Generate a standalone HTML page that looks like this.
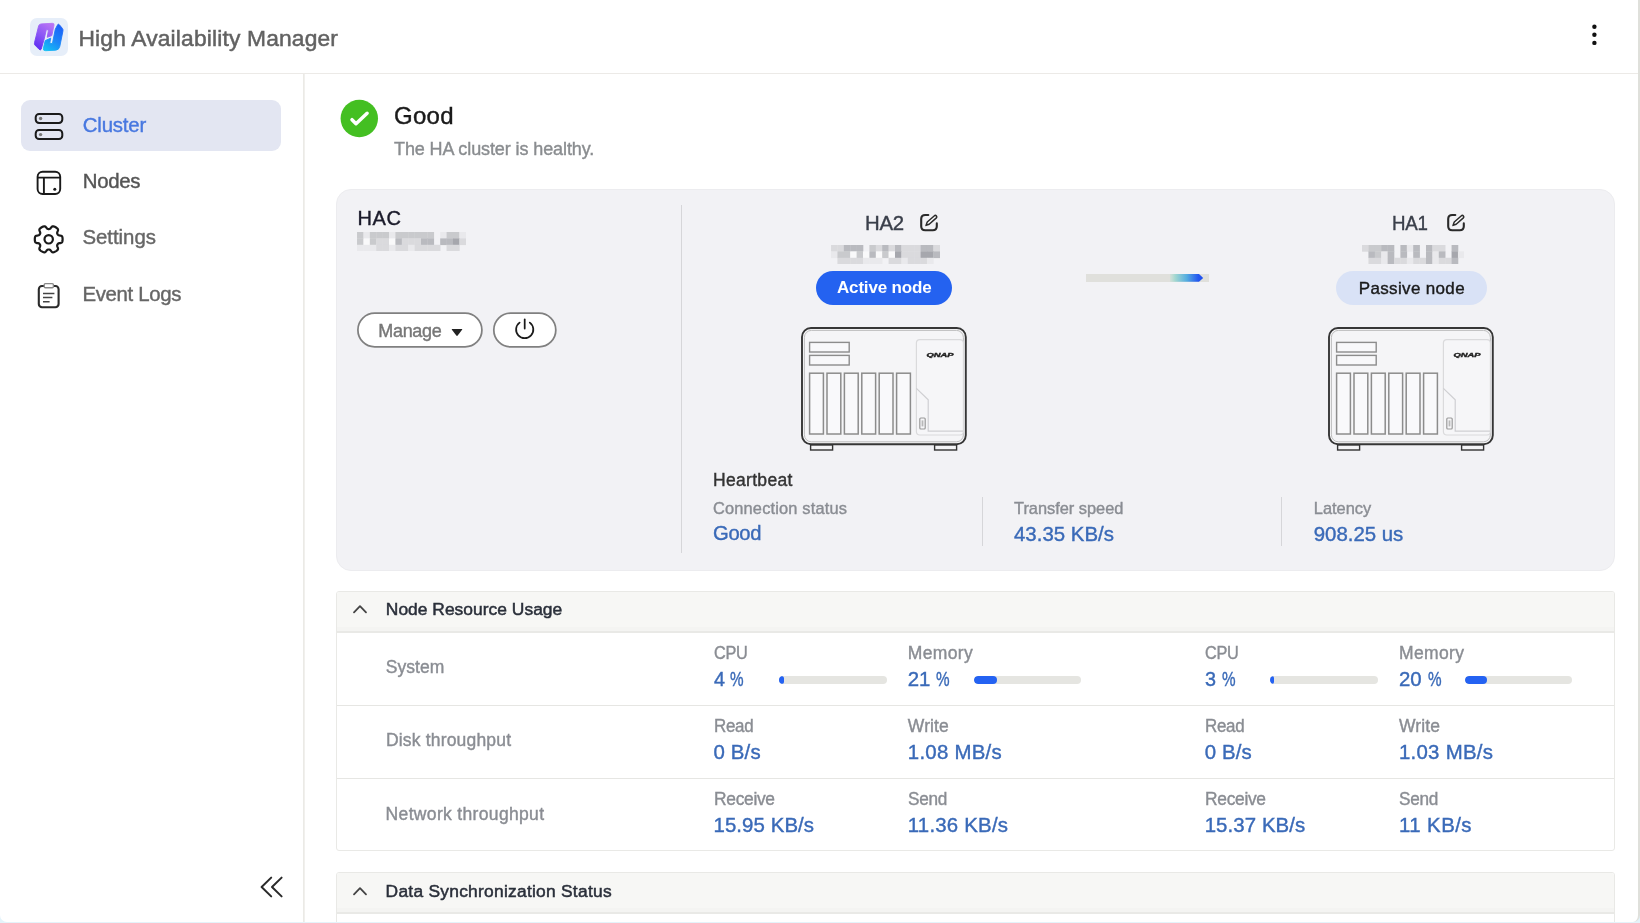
<!DOCTYPE html>
<html lang="en">
<head>
<meta charset="utf-8">
<title>High Availability Manager</title>
<style>
*{box-sizing:border-box;margin:0;padding:0}
html,body{width:1640px;height:923px;overflow:hidden;background:#e4f3fa}
body{position:relative;font-family:"Liberation Sans",Arial,sans-serif;color:#333}
.abs,.t,svg.i{position:absolute}
.t{white-space:nowrap;line-height:1;display:block}
#app{position:absolute;left:0;top:0;width:1640px;height:922px;overflow:hidden;will-change:transform;background:#fff;border-right:2px solid #dfe0db;border-radius:0 0 7px 7px}
header{position:absolute;left:0;top:0;width:1640px;height:74px;border-bottom:1px solid #eceae7;background:#fff}
.vline{position:absolute;left:303px;top:74px;width:2px;height:849px;background:linear-gradient(to right,#ebeae6 50%,#f1f0ed 50%)}
.sel{position:absolute;left:21px;top:100px;width:259.5px;height:51px;border-radius:9px;background:#e3e6f2}
.panel{position:absolute;left:335.5px;top:188.5px;width:1279px;height:382px;border-radius:15px;background:#f2f2f5;border:1px solid #ececef}
.pdiv{position:absolute;width:1px;background:#d6d6d9}
.pill{position:absolute;height:33.6px;border-radius:17px}
.bar{position:absolute;height:8px;border-radius:4px;background:#e5e5e1;overflow:hidden}
.bar i{position:absolute;left:0;top:0;height:8px;border-radius:4px;background:#2462f2;display:block}
.acc{position:absolute;left:336px;width:1279px;border:1px solid #e9e9e6;border-radius:3px;background:#fff;overflow:hidden}
.acch{position:absolute;left:0;top:0;width:100%;height:41px;background:linear-gradient(to bottom,#f7f7f5 0,#f7f7f5 35px,#f4f4f2 35px,#f4f4f2 39px,#e9e9e6 39px,#e9e9e6 40.5px,#fff 40.5px)}
.row{position:absolute;left:0;width:100%;height:1px;background:#e6e6e3}
</style>
</head>
<body>
<div id="app">
<header>
<svg class="i" style="left:30px;top:18px" width="38" height="38" viewBox="0 0 38 38">
<defs>
<linearGradient id="gp" x1="0.7" y1="0" x2="0.2" y2="1"><stop offset="0" stop-color="#b672f4"/><stop offset="0.5" stop-color="#8a56f6"/><stop offset="1" stop-color="#5c2cf2"/></linearGradient>
<linearGradient id="gb" x1="0.7" y1="0" x2="0.2" y2="1"><stop offset="0" stop-color="#1a62f8"/><stop offset="0.55" stop-color="#1c88f8"/><stop offset="1" stop-color="#14bef4"/></linearGradient>
</defs>
<rect x="0" y="0" width="38" height="38" rx="7" fill="#e6eef9"/>
<path d="M11.2,5.9 L22.4,5.3 Q24.5,5.3 24,7.3 L21.8,17.6 L17.2,19.3 L18.5,11.9 L16.3,11.7 L14.2,20.9 L11.2,31.2 Q10.4,32.6 9.1,31.3 L4.9,27 Q4.1,26 4.6,24.3 L8.6,8 Q9.2,6 11.2,5.9 Z" fill="url(#gp)" stroke="url(#gp)" stroke-width="0.9" stroke-linejoin="round"/>
<path d="M27.8,6.5 Q28.6,5.8 29.4,6.8 L32.4,10.4 Q33.3,11.5 32.9,13.2 L29.8,28.4 Q29,32 25.6,32.2 L15.6,32.7 Q12.9,32.7 13.4,30.2 L15.2,22.6 L20.7,20.2 L19.8,25.3 L22.4,25.6 L25.3,11.2 Z" fill="url(#gb)" stroke="url(#gb)" stroke-width="0.9" stroke-linejoin="round"/>
</svg>
<span class="t" style="top:25px;font-size:22.8px;line-height:26px;color:#626262;left:78.50px;letter-spacing:0.161px;-webkit-text-stroke:0.5px #626262;">High Availability Manager</span>
<svg class="i" style="left:1588px;top:20px" width="14" height="30" viewBox="0 0 14 30"><circle cx="6.4" cy="6.7" r="2.2" fill="#111"/><circle cx="6.4" cy="14.8" r="2.2" fill="#111"/><circle cx="6.4" cy="22.9" r="2.2" fill="#111"/></svg>
</header>
<div class="vline"></div>
<nav>
<div class="sel"></div>
<!-- nav icons -->
<svg class="i" style="left:30px;top:108px" width="40" height="36" viewBox="30 108 40 36" fill="none" stroke="#1a1a1a" stroke-width="2">
<rect x="35.7" y="113.9" width="26.6" height="9.1" rx="3.4"/><rect x="35.7" y="130" width="26.6" height="9.1" rx="3.4"/>
<circle cx="40.6" cy="118.5" r="1.7" fill="#777" stroke="none"/><circle cx="40.6" cy="134.6" r="1.7" fill="#777" stroke="none"/>
</svg>
<svg class="i" style="left:30px;top:166px" width="40" height="34" viewBox="30 166 40 34" fill="none" stroke="#1a1a1a" stroke-width="1.9">
<rect x="37.6" y="171.7" width="22.6" height="22.3" rx="5"/><path d="M37.6,177.6 H60.2 M43.9,177.6 V194"/>
<circle cx="54.8" cy="189.3" r="1.5" fill="#1a1a1a" stroke="none"/>
</svg>
<svg class="i" style="left:30px;top:222px" width="40" height="36" viewBox="30 222 40 36" fill="none" stroke="#1a1a1a" stroke-width="2.2" stroke-linejoin="round">
<path d="M62.60,239.30 L62.59,239.79 L62.56,240.27 L62.51,240.75 L62.43,241.23 L62.31,241.70 L62.11,242.15 L61.74,242.55 L61.12,242.86 L60.23,243.05 L59.34,243.17 L58.68,243.33 L58.24,243.55 L57.95,243.81 L57.72,244.10 L57.53,244.40 L57.37,244.72 L57.23,245.05 L57.15,245.44 L57.18,245.93 L57.37,246.58 L57.71,247.41 L57.99,248.27 L58.04,248.97 L57.87,249.49 L57.58,249.89 L57.24,250.23 L56.86,250.53 L56.47,250.82 L56.07,251.09 L55.65,251.34 L55.23,251.57 L54.79,251.79 L54.35,251.99 L53.89,252.16 L53.43,252.29 L52.94,252.33 L52.41,252.22 L51.82,251.83 L51.22,251.16 L50.67,250.45 L50.20,249.96 L49.79,249.69 L49.42,249.57 L49.06,249.51 L48.70,249.50 L48.34,249.51 L47.98,249.57 L47.61,249.69 L47.20,249.96 L46.73,250.45 L46.18,251.16 L45.58,251.83 L44.99,252.22 L44.46,252.33 L43.97,252.29 L43.51,252.16 L43.05,251.99 L42.61,251.79 L42.17,251.57 L41.75,251.34 L41.33,251.09 L40.93,250.82 L40.54,250.53 L40.16,250.23 L39.82,249.89 L39.53,249.49 L39.36,248.97 L39.41,248.27 L39.69,247.41 L40.03,246.58 L40.22,245.93 L40.25,245.44 L40.17,245.05 L40.03,244.72 L39.87,244.40 L39.68,244.10 L39.45,243.81 L39.16,243.55 L38.72,243.33 L38.06,243.17 L37.17,243.05 L36.28,242.86 L35.66,242.55 L35.29,242.15 L35.09,241.70 L34.97,241.23 L34.89,240.75 L34.84,240.27 L34.81,239.79 L34.80,239.30 L34.81,238.81 L34.84,238.33 L34.89,237.85 L34.97,237.37 L35.09,236.90 L35.29,236.45 L35.66,236.05 L36.28,235.74 L37.17,235.55 L38.06,235.43 L38.72,235.27 L39.16,235.05 L39.45,234.79 L39.68,234.50 L39.87,234.20 L40.03,233.88 L40.17,233.55 L40.25,233.16 L40.22,232.67 L40.03,232.02 L39.69,231.19 L39.41,230.33 L39.36,229.63 L39.53,229.11 L39.82,228.71 L40.16,228.37 L40.54,228.07 L40.93,227.78 L41.33,227.51 L41.75,227.26 L42.17,227.03 L42.61,226.81 L43.05,226.61 L43.51,226.44 L43.97,226.31 L44.46,226.27 L44.99,226.38 L45.58,226.77 L46.18,227.44 L46.73,228.15 L47.20,228.64 L47.61,228.91 L47.98,229.03 L48.34,229.09 L48.70,229.10 L49.06,229.09 L49.42,229.03 L49.79,228.91 L50.20,228.64 L50.67,228.15 L51.22,227.44 L51.82,226.77 L52.41,226.38 L52.94,226.27 L53.43,226.31 L53.89,226.44 L54.35,226.61 L54.79,226.81 L55.23,227.03 L55.65,227.26 L56.07,227.51 L56.47,227.78 L56.86,228.07 L57.24,228.37 L57.58,228.71 L57.87,229.11 L58.04,229.63 L57.99,230.33 L57.71,231.19 L57.37,232.02 L57.18,232.67 L57.15,233.16 L57.23,233.55 L57.37,233.88 L57.53,234.20 L57.72,234.50 L57.95,234.79 L58.24,235.05 L58.68,235.27 L59.34,235.43 L60.23,235.55 L61.12,235.74 L61.74,236.05 L62.11,236.45 L62.31,236.90 L62.43,237.37 L62.51,237.85 L62.56,238.33 L62.59,238.81Z"/><circle cx="48.7" cy="239.3" r="4.2"/>
</svg>
<svg class="i" style="left:30px;top:280px" width="40" height="32" viewBox="30 280 40 32" fill="none" stroke="#2a2a2a" stroke-width="2.1">
<rect x="38.8" y="286" width="19.8" height="21.2" rx="3.2"/>
<rect x="44.2" y="283.6" width="9.2" height="4.2" rx="1.2" fill="#fff" stroke="#888" stroke-width="1.4"/>
<path d="M43,293.4 H54.4 M43,297.6 H52.4 M43,301.8 H49.6" stroke-width="1.5" stroke="#444"/>
</svg>
<svg class="i" style="left:256px;top:873px" width="30" height="28" viewBox="256 873 30 28" fill="none" stroke="#2a2a2a" stroke-width="2" stroke-linecap="round" stroke-linejoin="round">
<path d="M271.2,877.6 L261.6,887 L271.2,896.4 M281.6,877.6 L272,887 L281.6,896.4"/>
</svg>
<span class="t" style="top:114px;font-size:20.4px;line-height:22px;color:#4878e0;left:82.80px;letter-spacing:-0.193px;-webkit-text-stroke:0.4px #4878e0;">Cluster</span>
<span class="t" style="top:170px;font-size:20.4px;line-height:22px;color:#555;left:82.80px;letter-spacing:-0.318px;-webkit-text-stroke:0.4px #555;">Nodes</span>
<span class="t" style="top:226px;font-size:20.4px;line-height:22px;color:#666;left:82.40px;letter-spacing:-0.016px;-webkit-text-stroke:0.4px #666;">Settings</span>
<span class="t" style="top:283px;font-size:20.4px;line-height:22px;color:#666;left:82.40px;letter-spacing:-0.319px;-webkit-text-stroke:0.4px #666;">Event Logs</span>
</nav>
<main>
<svg class="i" style="left:338px;top:97px" width="42" height="42" viewBox="338 97 42 42"><circle cx="359.3" cy="118.5" r="18.7" fill="#44bf22"/><path d="M352,119.7 L356,123.7 L367.1,113.3" fill="none" stroke="#fff" stroke-width="3.5" stroke-linecap="round" stroke-linejoin="round"/></svg>
<span class="t" style="top:102px;font-size:24px;line-height:27px;color:#1a1a1a;left:394.00px;letter-spacing:0.272px;-webkit-text-stroke:0.4px #1a1a1a;">Good</span>
<span class="t" style="top:139px;font-size:18px;line-height:20px;color:#8a8d90;left:394.00px;letter-spacing:-0.100px;-webkit-text-stroke:0.4px #8a8d90;">The HA cluster is healthy.</span>
<section class="panel"></section>
<div class="pdiv" style="left:681px;top:205px;height:348px"></div>
<div class="pdiv" style="left:982px;top:497px;height:49px"></div>
<div class="pdiv" style="left:1281px;top:497px;height:49px"></div>
<svg class="i" style="left:357.3px;top:231.8px;filter:blur(0.5px)" width="108.8" height="19.2" viewBox="0 0 108.8 19.2"><rect x="0.0" y="0.0" width="6.7" height="6.7" fill="#c9cacd"/><rect x="6.4" y="0.0" width="6.7" height="6.7" fill="#e9e9ec"/><rect x="12.8" y="0.0" width="6.7" height="6.7" fill="#c9cacd"/><rect x="19.2" y="0.0" width="6.7" height="6.7" fill="#c9cacd"/><rect x="25.6" y="0.0" width="6.7" height="6.7" fill="#c9cacd"/><rect x="32.0" y="0.0" width="6.7" height="6.7" fill="#e9e9ec"/><rect x="38.4" y="0.0" width="6.7" height="6.7" fill="#c9cacd"/><rect x="44.8" y="0.0" width="6.7" height="6.7" fill="#c9cacd"/><rect x="51.2" y="0.0" width="6.7" height="6.7" fill="#c9cacd"/><rect x="57.6" y="0.0" width="6.7" height="6.7" fill="#c9cacd"/><rect x="64.0" y="0.0" width="6.7" height="6.7" fill="#c9cacd"/><rect x="70.4" y="0.0" width="6.7" height="6.7" fill="#c9cacd"/><rect x="83.2" y="0.0" width="6.7" height="6.7" fill="#e9e9ec"/><rect x="89.6" y="0.0" width="6.7" height="6.7" fill="#c9cacd"/><rect x="96.0" y="0.0" width="6.7" height="6.7" fill="#c9cacd"/><rect x="102.4" y="0.0" width="6.7" height="6.7" fill="#e9e9ec"/><rect x="0.0" y="6.4" width="6.7" height="6.7" fill="#c9cacd"/><rect x="6.4" y="6.4" width="6.7" height="6.7" fill="#f9f9fa"/><rect x="12.8" y="6.4" width="6.7" height="6.7" fill="#c9cacd"/><rect x="19.2" y="6.4" width="6.7" height="6.7" fill="#dadadd"/><rect x="25.6" y="6.4" width="6.7" height="6.7" fill="#dadadd"/><rect x="32.0" y="6.4" width="6.7" height="6.7" fill="#f9f9fa"/><rect x="38.4" y="6.4" width="6.7" height="6.7" fill="#b9babf"/><rect x="44.8" y="6.4" width="6.7" height="6.7" fill="#dadadd"/><rect x="51.2" y="6.4" width="6.7" height="6.7" fill="#dadadd"/><rect x="57.6" y="6.4" width="6.7" height="6.7" fill="#dadadd"/><rect x="64.0" y="6.4" width="6.7" height="6.7" fill="#b9babf"/><rect x="70.4" y="6.4" width="6.7" height="6.7" fill="#b9babf"/><rect x="83.2" y="6.4" width="6.7" height="6.7" fill="#b9babf"/><rect x="89.6" y="6.4" width="6.7" height="6.7" fill="#b9babf"/><rect x="96.0" y="6.4" width="6.7" height="6.7" fill="#a6a7ad"/><rect x="102.4" y="6.4" width="6.7" height="6.7" fill="#dadadd"/><rect x="0.0" y="12.8" width="6.7" height="6.7" fill="#e9e9ec"/><rect x="6.4" y="12.8" width="6.7" height="6.7" fill="#e9e9ec"/><rect x="12.8" y="12.8" width="6.7" height="6.7" fill="#e9e9ec"/><rect x="19.2" y="12.8" width="6.7" height="6.7" fill="#dadadd"/><rect x="25.6" y="12.8" width="6.7" height="6.7" fill="#dadadd"/><rect x="32.0" y="12.8" width="6.7" height="6.7" fill="#e9e9ec"/><rect x="38.4" y="12.8" width="6.7" height="6.7" fill="#dadadd"/><rect x="44.8" y="12.8" width="6.7" height="6.7" fill="#dadadd"/><rect x="51.2" y="12.8" width="6.7" height="6.7" fill="#e9e9ec"/><rect x="57.6" y="12.8" width="6.7" height="6.7" fill="#dadadd"/><rect x="64.0" y="12.8" width="6.7" height="6.7" fill="#dadadd"/><rect x="70.4" y="12.8" width="6.7" height="6.7" fill="#dadadd"/><rect x="76.8" y="12.8" width="6.7" height="6.7" fill="#dadadd"/><rect x="89.6" y="12.8" width="6.7" height="6.7" fill="#dadadd"/><rect x="96.0" y="12.8" width="6.7" height="6.7" fill="#dadadd"/></svg>
<svg class="i" style="left:830.8px;top:244.5px;filter:blur(0.5px)" width="108.8" height="19.2" viewBox="0 0 108.8 19.2"><rect x="0.0" y="0.0" width="6.7" height="6.7" fill="#dadadd"/><rect x="6.4" y="0.0" width="6.7" height="6.7" fill="#dadadd"/><rect x="12.8" y="0.0" width="6.7" height="6.7" fill="#b9babf"/><rect x="19.2" y="0.0" width="6.7" height="6.7" fill="#b9babf"/><rect x="25.6" y="0.0" width="6.7" height="6.7" fill="#b9babf"/><rect x="38.4" y="0.0" width="6.7" height="6.7" fill="#c9cacd"/><rect x="44.8" y="0.0" width="6.7" height="6.7" fill="#dadadd"/><rect x="51.2" y="0.0" width="6.7" height="6.7" fill="#b9babf"/><rect x="57.6" y="0.0" width="6.7" height="6.7" fill="#dadadd"/><rect x="64.0" y="0.0" width="6.7" height="6.7" fill="#b9babf"/><rect x="70.4" y="0.0" width="6.7" height="6.7" fill="#dadadd"/><rect x="76.8" y="0.0" width="6.7" height="6.7" fill="#dadadd"/><rect x="83.2" y="0.0" width="6.7" height="6.7" fill="#dadadd"/><rect x="89.6" y="0.0" width="6.7" height="6.7" fill="#b9babf"/><rect x="96.0" y="0.0" width="6.7" height="6.7" fill="#b9babf"/><rect x="102.4" y="0.0" width="6.7" height="6.7" fill="#dadadd"/><rect x="0.0" y="6.4" width="6.7" height="6.7" fill="#e9e9ec"/><rect x="6.4" y="6.4" width="6.7" height="6.7" fill="#c9cacd"/><rect x="12.8" y="6.4" width="6.7" height="6.7" fill="#c9cacd"/><rect x="19.2" y="6.4" width="6.7" height="6.7" fill="#f9f9fa"/><rect x="25.6" y="6.4" width="6.7" height="6.7" fill="#c9cacd"/><rect x="32.0" y="6.4" width="6.7" height="6.7" fill="#f9f9fa"/><rect x="38.4" y="6.4" width="6.7" height="6.7" fill="#b9babf"/><rect x="44.8" y="6.4" width="6.7" height="6.7" fill="#f9f9fa"/><rect x="51.2" y="6.4" width="6.7" height="6.7" fill="#c9cacd"/><rect x="57.6" y="6.4" width="6.7" height="6.7" fill="#f9f9fa"/><rect x="64.0" y="6.4" width="6.7" height="6.7" fill="#a6a7ad"/><rect x="70.4" y="6.4" width="6.7" height="6.7" fill="#dadadd"/><rect x="76.8" y="6.4" width="6.7" height="6.7" fill="#dadadd"/><rect x="83.2" y="6.4" width="6.7" height="6.7" fill="#dadadd"/><rect x="89.6" y="6.4" width="6.7" height="6.7" fill="#a6a7ad"/><rect x="96.0" y="6.4" width="6.7" height="6.7" fill="#a6a7ad"/><rect x="102.4" y="6.4" width="6.7" height="6.7" fill="#b9babf"/><rect x="6.4" y="12.8" width="6.7" height="6.7" fill="#dadadd"/><rect x="12.8" y="12.8" width="6.7" height="6.7" fill="#dadadd"/><rect x="19.2" y="12.8" width="6.7" height="6.7" fill="#dadadd"/><rect x="25.6" y="12.8" width="6.7" height="6.7" fill="#dadadd"/><rect x="32.0" y="12.8" width="6.7" height="6.7" fill="#e9e9ec"/><rect x="38.4" y="12.8" width="6.7" height="6.7" fill="#e9e9ec"/><rect x="44.8" y="12.8" width="6.7" height="6.7" fill="#e9e9ec"/><rect x="57.6" y="12.8" width="6.7" height="6.7" fill="#dadadd"/><rect x="64.0" y="12.8" width="6.7" height="6.7" fill="#dadadd"/><rect x="70.4" y="12.8" width="6.7" height="6.7" fill="#e9e9ec"/><rect x="76.8" y="12.8" width="6.7" height="6.7" fill="#dadadd"/><rect x="83.2" y="12.8" width="6.7" height="6.7" fill="#dadadd"/><rect x="89.6" y="12.8" width="6.7" height="6.7" fill="#dadadd"/><rect x="96.0" y="12.8" width="6.7" height="6.7" fill="#e9e9ec"/></svg>
<svg class="i" style="left:1361.6px;top:244.5px;filter:blur(0.5px)" width="102.4" height="19.2" viewBox="0 0 102.4 19.2"><rect x="0.0" y="0.0" width="6.7" height="6.7" fill="#dadadd"/><rect x="6.4" y="0.0" width="6.7" height="6.7" fill="#c9cacd"/><rect x="12.8" y="0.0" width="6.7" height="6.7" fill="#c9cacd"/><rect x="19.2" y="0.0" width="6.7" height="6.7" fill="#b9babf"/><rect x="25.6" y="0.0" width="6.7" height="6.7" fill="#b9babf"/><rect x="38.4" y="0.0" width="6.7" height="6.7" fill="#b9babf"/><rect x="44.8" y="0.0" width="6.7" height="6.7" fill="#e9e9ec"/><rect x="51.2" y="0.0" width="6.7" height="6.7" fill="#b9babf"/><rect x="64.0" y="0.0" width="6.7" height="6.7" fill="#b9babf"/><rect x="70.4" y="0.0" width="6.7" height="6.7" fill="#dadadd"/><rect x="76.8" y="0.0" width="6.7" height="6.7" fill="#dadadd"/><rect x="89.6" y="0.0" width="6.7" height="6.7" fill="#b9babf"/><rect x="6.4" y="6.4" width="6.7" height="6.7" fill="#b9babf"/><rect x="12.8" y="6.4" width="6.7" height="6.7" fill="#c9cacd"/><rect x="19.2" y="6.4" width="6.7" height="6.7" fill="#e9e9ec"/><rect x="25.6" y="6.4" width="6.7" height="6.7" fill="#b9babf"/><rect x="38.4" y="6.4" width="6.7" height="6.7" fill="#b9babf"/><rect x="51.2" y="6.4" width="6.7" height="6.7" fill="#b9babf"/><rect x="64.0" y="6.4" width="6.7" height="6.7" fill="#b9babf"/><rect x="70.4" y="6.4" width="6.7" height="6.7" fill="#e9e9ec"/><rect x="76.8" y="6.4" width="6.7" height="6.7" fill="#b9babf"/><rect x="89.6" y="6.4" width="6.7" height="6.7" fill="#a6a7ad"/><rect x="96.0" y="6.4" width="6.7" height="6.7" fill="#e9e9ec"/><rect x="6.4" y="12.8" width="6.7" height="6.7" fill="#dadadd"/><rect x="12.8" y="12.8" width="6.7" height="6.7" fill="#dadadd"/><rect x="19.2" y="12.8" width="6.7" height="6.7" fill="#e9e9ec"/><rect x="25.6" y="12.8" width="6.7" height="6.7" fill="#b9babf"/><rect x="32.0" y="12.8" width="6.7" height="6.7" fill="#dadadd"/><rect x="38.4" y="12.8" width="6.7" height="6.7" fill="#dadadd"/><rect x="44.8" y="12.8" width="6.7" height="6.7" fill="#e9e9ec"/><rect x="51.2" y="12.8" width="6.7" height="6.7" fill="#dadadd"/><rect x="57.6" y="12.8" width="6.7" height="6.7" fill="#dadadd"/><rect x="64.0" y="12.8" width="6.7" height="6.7" fill="#b9babf"/><rect x="70.4" y="12.8" width="6.7" height="6.7" fill="#e9e9ec"/><rect x="76.8" y="12.8" width="6.7" height="6.7" fill="#dadadd"/><rect x="83.2" y="12.8" width="6.7" height="6.7" fill="#dadadd"/><rect x="89.6" y="12.8" width="6.7" height="6.7" fill="#b9babf"/></svg>
<svg class="i" style="left:355px;top:310px" width="204" height="40" viewBox="355 310 204 40"><rect x="357.9" y="313.2" width="124" height="33.6" rx="16.8" fill="#fff" stroke="#808080" stroke-width="1.75"/><rect x="493.8" y="313.2" width="62" height="33.6" rx="16.8" fill="#fff" stroke="#808080" stroke-width="1.75"/></svg>
<svg class="i" style="left:451.4px;top:327.4px" width="13" height="11" viewBox="0 0 13 11"><path d="M1.2,2 H10.8 Q11.7,2 11.1,2.8 L6.7,8.6 Q6,9.4 5.3,8.6 L0.9,2.8 Q0.3,2 1.2,2Z" fill="#222"/></svg>
<svg class="i" style="left:512px;top:316px" width="26" height="26" viewBox="512 316 26 26" fill="none" stroke="#1a1a1a" stroke-width="1.75" stroke-linecap="round"><path d="M524.7,319.4 V328.6"/><path d="M519.6,322.6 A8.6,8.6 0 1 0 529.8,322.6"/></svg>
<div class="pill" style="left:816.3px;top:271.2px;width:136px;background:#2462f0"></div>
<div class="pill" style="left:1336.3px;top:271.2px;width:150.6px;background:#d9e2f6"></div>
<svg class="i" style="left:919px;top:213px" width="21" height="20" viewBox="-1 -1 21 20" fill="none" stroke="#2a2a2a" stroke-width="2.1" stroke-linecap="round" stroke-linejoin="round"><path d="M8.3,1 H5.2 Q1.2,1 1.2,5 V12.3 Q1.2,16.3 5.2,16.3 H12.8 Q16.8,16.3 16.8,12.3 V9.4"/><path d="M14.45,1.71 A1.45,1.45 0 0 1 16.35,3.89 L9.15,10.19 L6,11.4 L7.25,8.01 Z" stroke-width="1.5" fill="#fbfbfc"/></svg><svg class="i" style="left:1446px;top:213px" width="21" height="20" viewBox="-1 -1 21 20" fill="none" stroke="#2a2a2a" stroke-width="2.1" stroke-linecap="round" stroke-linejoin="round"><path d="M8.3,1 H5.2 Q1.2,1 1.2,5 V12.3 Q1.2,16.3 5.2,16.3 H12.8 Q16.8,16.3 16.8,12.3 V9.4"/><path d="M14.45,1.71 A1.45,1.45 0 0 1 16.35,3.89 L9.15,10.19 L6,11.4 L7.25,8.01 Z" stroke-width="1.5" fill="#fbfbfc"/></svg>
<svg class="i" style="left:799.2px;top:325.3px" width="170" height="128" viewBox="-2 -2 170 128" fill="none"><rect x="1" y="1" width="163.8" height="116.2" rx="9" fill="#f5f5f7" stroke="#363636" stroke-width="1.9"/><rect x="3.4" y="3.4" width="159" height="111.4" rx="7" stroke="#bdbdbd" stroke-width="1"/><rect x="9.6" y="118" width="22" height="5" fill="#f4f4f6" stroke="#333" stroke-width="1.4"/><rect x="133.6" y="118" width="22" height="5" fill="#f4f4f6" stroke="#333" stroke-width="1.4"/><rect x="8.6" y="15.4" width="39.6" height="9.6" fill="#f8f8fa" stroke="#8c8c8c" stroke-width="1.4"/><rect x="8.6" y="28.4" width="39.6" height="9.6" fill="#f8f8fa" stroke="#8c8c8c" stroke-width="1.4"/><rect x="8.6" y="46.2" width="13.8" height="60.8" fill="#f9f9fb" stroke="#8c8c8c" stroke-width="1.5"/><rect x="26.0" y="46.2" width="13.8" height="60.8" fill="#f9f9fb" stroke="#8c8c8c" stroke-width="1.5"/><rect x="43.4" y="46.2" width="13.8" height="60.8" fill="#f9f9fb" stroke="#8c8c8c" stroke-width="1.5"/><rect x="60.8" y="46.2" width="13.8" height="60.8" fill="#f9f9fb" stroke="#8c8c8c" stroke-width="1.5"/><rect x="78.2" y="46.2" width="13.8" height="60.8" fill="#f9f9fb" stroke="#8c8c8c" stroke-width="1.5"/><rect x="95.6" y="46.2" width="13.8" height="60.8" fill="#f9f9fb" stroke="#8c8c8c" stroke-width="1.5"/><rect x="115.4" y="12.6" width="47" height="95.4" rx="3.5" fill="#f6f6f8" stroke="#dadadc" stroke-width="1.2"/><path d="M115.4,61.4 L127.2,72.8 V104.2 H162" stroke="#cfcfd2" stroke-width="1.2"/><rect x="118.8" y="91" width="5.4" height="11" rx="1" stroke="#9a9a9a" stroke-width="1.2"/><rect x="120.6" y="93.4" width="1.8" height="6" fill="#b8b8b8"/><text x="125.4" y="29.8" font-family="Liberation Sans,Arial,sans-serif" font-size="5.6" font-weight="bold" font-style="italic" fill="#222" stroke="#222" stroke-width="0.35" textLength="27" lengthAdjust="spacingAndGlyphs">QNAP</text></svg><svg class="i" style="left:1326.2px;top:325.3px" width="170" height="128" viewBox="-2 -2 170 128" fill="none"><rect x="1" y="1" width="163.8" height="116.2" rx="9" fill="#f5f5f7" stroke="#363636" stroke-width="1.9"/><rect x="3.4" y="3.4" width="159" height="111.4" rx="7" stroke="#bdbdbd" stroke-width="1"/><rect x="9.6" y="118" width="22" height="5" fill="#f4f4f6" stroke="#333" stroke-width="1.4"/><rect x="133.6" y="118" width="22" height="5" fill="#f4f4f6" stroke="#333" stroke-width="1.4"/><rect x="8.6" y="15.4" width="39.6" height="9.6" fill="#f8f8fa" stroke="#8c8c8c" stroke-width="1.4"/><rect x="8.6" y="28.4" width="39.6" height="9.6" fill="#f8f8fa" stroke="#8c8c8c" stroke-width="1.4"/><rect x="8.6" y="46.2" width="13.8" height="60.8" fill="#f9f9fb" stroke="#8c8c8c" stroke-width="1.5"/><rect x="26.0" y="46.2" width="13.8" height="60.8" fill="#f9f9fb" stroke="#8c8c8c" stroke-width="1.5"/><rect x="43.4" y="46.2" width="13.8" height="60.8" fill="#f9f9fb" stroke="#8c8c8c" stroke-width="1.5"/><rect x="60.8" y="46.2" width="13.8" height="60.8" fill="#f9f9fb" stroke="#8c8c8c" stroke-width="1.5"/><rect x="78.2" y="46.2" width="13.8" height="60.8" fill="#f9f9fb" stroke="#8c8c8c" stroke-width="1.5"/><rect x="95.6" y="46.2" width="13.8" height="60.8" fill="#f9f9fb" stroke="#8c8c8c" stroke-width="1.5"/><rect x="115.4" y="12.6" width="47" height="95.4" rx="3.5" fill="#f6f6f8" stroke="#dadadc" stroke-width="1.2"/><path d="M115.4,61.4 L127.2,72.8 V104.2 H162" stroke="#cfcfd2" stroke-width="1.2"/><rect x="118.8" y="91" width="5.4" height="11" rx="1" stroke="#9a9a9a" stroke-width="1.2"/><rect x="120.6" y="93.4" width="1.8" height="6" fill="#b8b8b8"/><text x="125.4" y="29.8" font-family="Liberation Sans,Arial,sans-serif" font-size="5.6" font-weight="bold" font-style="italic" fill="#222" stroke="#222" stroke-width="0.35" textLength="27" lengthAdjust="spacingAndGlyphs">QNAP</text></svg>
<div class="abs" style="left:1086.4px;top:274px;width:123px;height:7.8px;background:#e0e0dc"></div>
<svg class="i" style="left:1168px;top:274px" width="38" height="8" viewBox="0 0 38 8"><defs><linearGradient id="gh" x1="0" x2="1" y1="0" y2="0"><stop offset="0" stop-color="#b4dcd0" stop-opacity="0.3"/><stop offset="0.15" stop-color="#a4d8d0"/><stop offset="0.5" stop-color="#56aee0"/><stop offset="0.85" stop-color="#2458f0"/><stop offset="1" stop-color="#2050ee"/></linearGradient></defs><path d="M2,0 H31 L35.2,3.9 L31,7.8 H2 Z" fill="url(#gh)"/></svg>
<span class="t" style="top:207px;font-size:20px;line-height:22px;color:#1a1a2a;left:357.50px;letter-spacing:0.558px;-webkit-text-stroke:0.4px #1a1a2a;">HAC</span>
<span class="t" style="top:321px;font-size:18px;line-height:20px;color:#777;left:378.30px;letter-spacing:-0.326px;-webkit-text-stroke:0.4px #777;">Manage</span>
<span class="t" style="top:211px;font-size:20.5px;line-height:23px;color:#3a3f4a;left:865.00px;letter-spacing:-0.300px;transform:scaleX(0.9935);transform-origin:0 0;-webkit-text-stroke:0.4px #3a3f4a;">HA2</span>
<span class="t" style="top:278px;font-size:17px;line-height:19px;color:#fff;left:837.00px;letter-spacing:-0.174px;font-weight:bold;">Active node</span>
<span class="t" style="top:211px;font-size:20.5px;line-height:23px;color:#3a3f4a;left:1392.20px;letter-spacing:-0.300px;transform:scaleX(0.9120);transform-origin:0 0;-webkit-text-stroke:0.4px #3a3f4a;">HA1</span>
<span class="t" style="top:279px;font-size:17px;line-height:19px;color:#1a1a1a;left:1358.80px;letter-spacing:0.341px;-webkit-text-stroke:0.4px #1a1a1a;">Passive node</span>
<span class="t" style="top:470px;font-size:17.5px;line-height:20px;color:#333;left:713.00px;letter-spacing:0.313px;-webkit-text-stroke:0.4px #333;">Heartbeat</span>
<span class="t" style="top:499px;font-size:16.4px;line-height:18px;color:#8a8d93;left:713.00px;letter-spacing:0.170px;-webkit-text-stroke:0.4px #8a8d93;">Connection status</span>
<span class="t" style="top:522px;font-size:20.4px;line-height:22px;color:#3a6ab8;left:713.00px;letter-spacing:-0.300px;transform:scaleX(0.9902);transform-origin:0 0;-webkit-text-stroke:0.4px #3a6ab8;">Good</span>
<span class="t" style="top:499px;font-size:16.4px;line-height:18px;color:#8a8d93;left:1014.00px;letter-spacing:-0.021px;-webkit-text-stroke:0.4px #8a8d93;">Transfer speed</span>
<span class="t" style="top:523px;font-size:20.4px;line-height:22px;color:#3a6ab8;left:1014.00px;letter-spacing:0.022px;-webkit-text-stroke:0.4px #3a6ab8;">43.35 KB/s</span>
<span class="t" style="top:499px;font-size:16.4px;line-height:18px;color:#8a8d93;left:1313.80px;letter-spacing:-0.007px;-webkit-text-stroke:0.4px #8a8d93;">Latency</span>
<span class="t" style="top:523px;font-size:20.4px;line-height:22px;color:#3a6ab8;left:1313.80px;letter-spacing:-0.026px;-webkit-text-stroke:0.4px #3a6ab8;">908.25 us</span>
<section class="acc" style="top:591.4px;height:259.6px"><div class="acch"></div><div class="row" style="top:112.4px"></div><div class="row" style="top:185.2px"></div></section>
<section class="acc" style="top:872.4px;height:80px"><div class="acch"></div></section>
<svg class="i" style="left:350.6px;top:603.4px" width="18" height="13" viewBox="-2 -2 18 13" fill="none" stroke="#444" stroke-width="1.8" stroke-linecap="round" stroke-linejoin="round"><path d="M1,7.4 L7,1.2 L13,7.4"/></svg><svg class="i" style="left:350.6px;top:884.8px" width="18" height="13" viewBox="-2 -2 18 13" fill="none" stroke="#444" stroke-width="1.8" stroke-linecap="round" stroke-linejoin="round"><path d="M1,7.4 L7,1.2 L13,7.4"/></svg>
<div class="bar" style="left:779.2px;top:676px;width:107.4px"><i style="width:4.6px"></i></div>
<div class="bar" style="left:973.7px;top:676px;width:107.4px"><i style="width:23.2px"></i></div>
<div class="bar" style="left:1270.4px;top:676px;width:107.4px"><i style="width:3.8px"></i></div>
<div class="bar" style="left:1465.1px;top:676px;width:107.4px"><i style="width:22px"></i></div>
<span class="t" style="top:599px;font-size:17.4px;line-height:20px;color:#2a2f3a;left:385.80px;letter-spacing:0.027px;-webkit-text-stroke:0.5px #2a2f3a;">Node Resource Usage</span>
<span class="t" style="top:657px;font-size:17.5px;line-height:20px;color:#8a8d93;left:385.80px;letter-spacing:0.024px;-webkit-text-stroke:0.4px #8a8d93;">System</span>
<span class="t" style="top:730px;font-size:17.5px;line-height:20px;color:#8a8d93;left:385.90px;letter-spacing:0.185px;-webkit-text-stroke:0.4px #8a8d93;">Disk throughput</span>
<span class="t" style="top:804px;font-size:17.5px;line-height:20px;color:#8a8d93;left:385.60px;letter-spacing:0.337px;-webkit-text-stroke:0.4px #8a8d93;">Network throughput</span>
<span class="t" style="top:643px;font-size:17.5px;line-height:20px;color:#8a8d93;left:713.50px;letter-spacing:-0.300px;transform:scaleX(0.9308);transform-origin:0 0;-webkit-text-stroke:0.4px #8a8d93;">CPU</span>
<span class="t" style="top:668px;font-size:20.4px;line-height:22px;color:#3a6ab8;left:713.50px;transform:scaleX(0.972);transform-origin:0 0;-webkit-text-stroke:0.4px #3a6ab8;">4</span>
<span class="t" style="top:668px;font-size:20.4px;line-height:22px;color:#3a6ab8;left:730.40px;transform:scaleX(0.749);transform-origin:0 0;-webkit-text-stroke:0.4px #3a6ab8;">%</span>
<span class="t" style="top:643px;font-size:17.5px;line-height:20px;color:#8a8d93;left:907.80px;letter-spacing:0.340px;-webkit-text-stroke:0.4px #8a8d93;">Memory</span>
<span class="t" style="top:668px;font-size:20.4px;line-height:22px;color:#3a6ab8;left:907.80px;letter-spacing:-0.068px;-webkit-text-stroke:0.4px #3a6ab8;">21</span>
<span class="t" style="top:668px;font-size:20.4px;line-height:22px;color:#3a6ab8;left:936.30px;transform:scaleX(0.749);transform-origin:0 0;-webkit-text-stroke:0.4px #3a6ab8;">%</span>
<span class="t" style="top:716px;font-size:17.5px;line-height:20px;color:#8a8d93;left:713.50px;letter-spacing:-0.300px;transform:scaleX(0.9678);transform-origin:0 0;-webkit-text-stroke:0.4px #8a8d93;">Read</span>
<span class="t" style="top:741px;font-size:20.4px;line-height:22px;color:#3a6ab8;left:713.50px;letter-spacing:0.153px;-webkit-text-stroke:0.4px #3a6ab8;">0 B/s</span>
<span class="t" style="top:716px;font-size:17.5px;line-height:20px;color:#8a8d93;left:907.80px;letter-spacing:0.127px;-webkit-text-stroke:0.4px #8a8d93;">Write</span>
<span class="t" style="top:741px;font-size:20.4px;line-height:22px;color:#3a6ab8;left:907.80px;letter-spacing:0.257px;-webkit-text-stroke:0.4px #3a6ab8;">1.08 MB/s</span>
<span class="t" style="top:789px;font-size:17.5px;line-height:20px;color:#8a8d93;left:713.50px;letter-spacing:-0.300px;transform:scaleX(0.9934);transform-origin:0 0;-webkit-text-stroke:0.4px #8a8d93;">Receive</span>
<span class="t" style="top:814px;font-size:20.4px;line-height:22px;color:#3a6ab8;left:713.50px;letter-spacing:0.089px;-webkit-text-stroke:0.4px #3a6ab8;">15.95 KB/s</span>
<span class="t" style="top:789px;font-size:17.5px;line-height:20px;color:#8a8d93;left:907.80px;letter-spacing:-0.300px;transform:scaleX(0.9812);transform-origin:0 0;-webkit-text-stroke:0.4px #8a8d93;">Send</span>
<span class="t" style="top:814px;font-size:20.4px;line-height:22px;color:#3a6ab8;left:907.80px;letter-spacing:0.213px;-webkit-text-stroke:0.4px #3a6ab8;">11.36 KB/s</span>
<span class="t" style="top:643px;font-size:17.5px;line-height:20px;color:#8a8d93;left:1204.70px;letter-spacing:-0.300px;transform:scaleX(0.9308);transform-origin:0 0;-webkit-text-stroke:0.4px #8a8d93;">CPU</span>
<span class="t" style="top:668px;font-size:20.4px;line-height:22px;color:#3a6ab8;left:1204.70px;transform:scaleX(0.972);transform-origin:0 0;-webkit-text-stroke:0.4px #3a6ab8;">3</span>
<span class="t" style="top:668px;font-size:20.4px;line-height:22px;color:#3a6ab8;left:1221.60px;transform:scaleX(0.749);transform-origin:0 0;-webkit-text-stroke:0.4px #3a6ab8;">%</span>
<span class="t" style="top:643px;font-size:17.5px;line-height:20px;color:#8a8d93;left:1399.00px;letter-spacing:0.340px;-webkit-text-stroke:0.4px #8a8d93;">Memory</span>
<span class="t" style="top:668px;font-size:20.4px;line-height:22px;color:#3a6ab8;left:1399.00px;letter-spacing:-0.068px;-webkit-text-stroke:0.4px #3a6ab8;">20</span>
<span class="t" style="top:668px;font-size:20.4px;line-height:22px;color:#3a6ab8;left:1427.50px;transform:scaleX(0.749);transform-origin:0 0;-webkit-text-stroke:0.4px #3a6ab8;">%</span>
<span class="t" style="top:716px;font-size:17.5px;line-height:20px;color:#8a8d93;left:1204.70px;letter-spacing:-0.300px;transform:scaleX(0.9678);transform-origin:0 0;-webkit-text-stroke:0.4px #8a8d93;">Read</span>
<span class="t" style="top:741px;font-size:20.4px;line-height:22px;color:#3a6ab8;left:1204.70px;letter-spacing:0.153px;-webkit-text-stroke:0.4px #3a6ab8;">0 B/s</span>
<span class="t" style="top:716px;font-size:17.5px;line-height:20px;color:#8a8d93;left:1399.00px;letter-spacing:0.127px;-webkit-text-stroke:0.4px #8a8d93;">Write</span>
<span class="t" style="top:741px;font-size:20.4px;line-height:22px;color:#3a6ab8;left:1399.00px;letter-spacing:0.257px;-webkit-text-stroke:0.4px #3a6ab8;">1.03 MB/s</span>
<span class="t" style="top:789px;font-size:17.5px;line-height:20px;color:#8a8d93;left:1204.70px;letter-spacing:-0.300px;transform:scaleX(0.9934);transform-origin:0 0;-webkit-text-stroke:0.4px #8a8d93;">Receive</span>
<span class="t" style="top:814px;font-size:20.4px;line-height:22px;color:#3a6ab8;left:1204.70px;letter-spacing:0.089px;-webkit-text-stroke:0.4px #3a6ab8;">15.37 KB/s</span>
<span class="t" style="top:789px;font-size:17.5px;line-height:20px;color:#8a8d93;left:1399.00px;letter-spacing:-0.300px;transform:scaleX(0.9812);transform-origin:0 0;-webkit-text-stroke:0.4px #8a8d93;">Send</span>
<span class="t" style="top:814px;font-size:20.4px;line-height:22px;color:#3a6ab8;left:1399.00px;letter-spacing:0.429px;-webkit-text-stroke:0.4px #3a6ab8;">11 KB/s</span>
<span class="t" style="top:881px;font-size:17.4px;line-height:20px;color:#2a2f3a;left:385.60px;letter-spacing:0.252px;-webkit-text-stroke:0.5px #2a2f3a;">Data Synchronization Status</span>
</main>
</div>
</body>
</html>
